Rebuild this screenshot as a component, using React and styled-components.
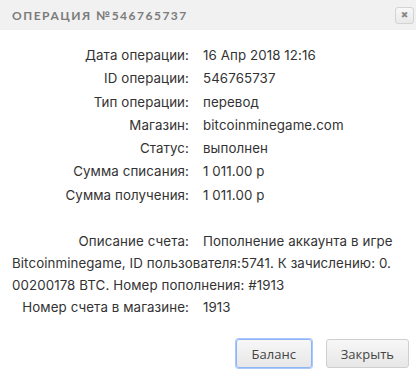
import styled, { createGlobalStyle } from "styled-components";

const GlobalStyle = createGlobalStyle`
  html, body {
    margin: 0;
    padding: 0;
    background: #fff;
  }
`;

const Dialog = styled.div`
  width: 416px;
  height: 377px;
  background: #fff;
  font-family: Inter, "Open Sans", sans-serif;
  color: #333;
  display: flex;
  flex-direction: column;
`;

const Header = styled.div`
  height: 30px;
  background: #f1f1f1;
  display: flex;
  align-items: center;
  justify-content: space-between;
  padding: 0 2px 0 12px;
`;

const Title = styled.h2`
  margin: 0;
  font-family: Lato, "Open Sans", sans-serif;
  font-size: 12px;
  font-weight: 700;
  letter-spacing: 1.5px;
  color: #7b7b7b;
`;

const CloseButton = styled.button`
  width: 19px;
  height: 17px;
  padding: 0;
  border: 1px solid #d3d3d3;
  border-radius: 3px;
  background: linear-gradient(#f8f8f8, #e9e9e9);
  color: #8a8a8a;
  font-size: 9px;
  line-height: 15px;
  font-family: "DejaVu Sans", sans-serif;
  cursor: pointer;
`;

const Body = styled.div`
  flex: 1;
  padding: 14px 12px 0 12px;
  font-size: 13.3px;
  letter-spacing: 0.1px;
`;

const Row = styled.div`
  display: flex;
  line-height: 23.3px;
`;

const Label = styled.span`
  width: 177px;
  flex: none;
  text-align: right;
  margin-right: 14px;
`;

const Value = styled.span`
  white-space: nowrap;
`;

const Spacer = styled.div`
  height: 23px;
`;

const Description = styled.p`
  margin: 0;
  line-height: 22px;
`;

const InlineLabel = styled.span`
  display: inline-block;
  width: 177px;
  text-align: right;
  margin-right: 14px;
`;

const ShopRow = styled(Row)`
  line-height: 22px;
`;

const Footer = styled.div`
  display: flex;
  justify-content: flex-end;
  gap: 14px;
  padding: 0 7px 9px 0;
`;

const Button = styled.button`
  height: 29px;
  padding: 0 14px;
  min-width: ${(p) => p.$width}px;
  border: 1px solid ${(p) => (p.$focused ? "#8fb4f5" : "#cfcfcf")};
  box-shadow: ${(p) => (p.$focused ? "0 0 0 1px #a9c8fb" : "none")};
  border-radius: 3px;
  background: linear-gradient(#f7f7f7, #e7e7e7);
  color: #444;
  font-family: "Open Sans", sans-serif;
  font-size: 13px;
  cursor: pointer;
`;

const rows = [
  ["Дата операции:", "16 Апр 2018 12:16"],
  ["ID операции:", "546765737"],
  ["Тип операции:", "перевод"],
  ["Магазин:", "bitcoinminegame.com"],
  ["Статус:", "выполнен"],
  ["Сумма списания:", "1 011.00 р"],
  ["Сумма получения:", "1 011.00 р"],
];

export default function App() {
  return (
    <>
      <GlobalStyle />
      <Dialog>
        <Header>
          <Title>ОПЕРАЦИЯ №546765737</Title>
          <CloseButton>✖</CloseButton>
        </Header>
        <Body>
          {rows.map(([label, value]) => (
            <Row key={label}>
              <Label>{label}</Label>
              <Value>{value}</Value>
            </Row>
          ))}
          <Spacer />
          <Description>
            <InlineLabel>Описание счета:</InlineLabel>
            Пополнение аккаунта в игре Bitcoinminegame, ID пользователя:5741. К зачислению: 0.<wbr />00200178 BTC. Номер пополнения: #1913
          </Description>
          <ShopRow>
            <Label>Номер счета в магазине:</Label>
            <Value>1913</Value>
          </ShopRow>
        </Body>
        <Footer>
          <Button $focused $width={76}>Баланс</Button>
          <Button $width={83}>Закрыть</Button>
        </Footer>
      </Dialog>
    </>
  );
}
